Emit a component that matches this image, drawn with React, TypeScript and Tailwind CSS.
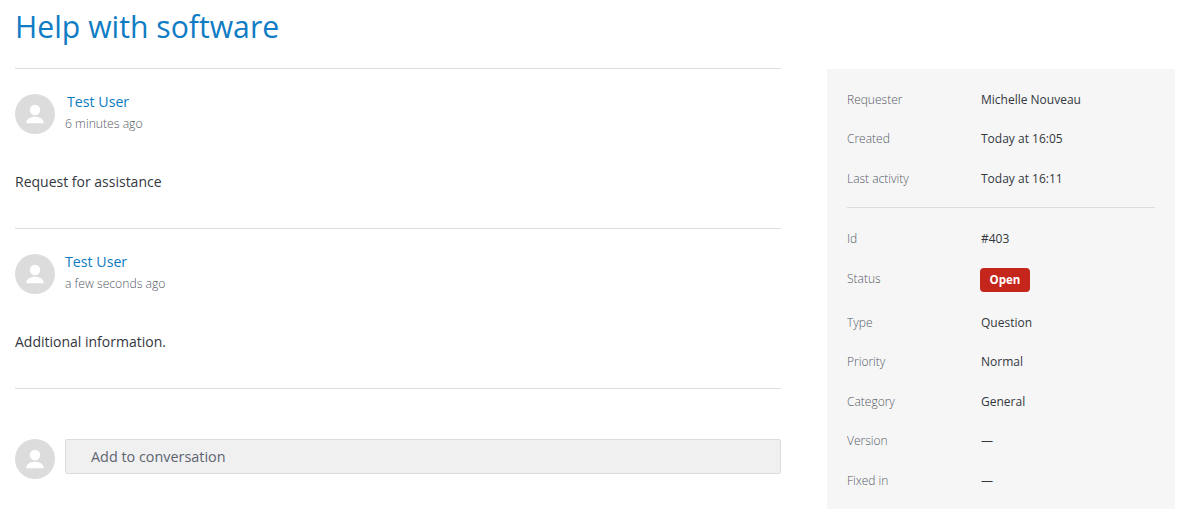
const font = { sans: 'font-["Open_Sans","Noto_Sans",sans-serif]' }

type Post = {
    name: string
    time: string
    body: string
    nameClass: string
}

const posts: Post[] = [
    { name: 'Test User', time: '6 minutes ago', body: 'Request for assistance', nameClass: 'pl-[2px]' },
    { name: 'Test User', time: 'a few seconds ago', body: 'Additional information.', nameClass: '' },
]

const topRows = [
    { label: 'Requester', value: 'Michelle Nouveau' },
    { label: 'Created', value: 'Today at 16:05' },
    { label: 'Last activity', value: 'Today at 16:11' },
]

const bottomRows = [
    { label: 'Type', value: 'Question' },
    { label: 'Priority', value: 'Normal' },
    { label: 'Category', value: 'General' },
    { label: 'Version', value: '—' },
    { label: 'Fixed in', value: '—' },
]

function Avatar() {
    return (
        <div className="w-10 h-10 shrink-0 rounded-full bg-[#dcdcdc] flex items-center justify-center">
            <svg width="20" height="20" viewBox="0 0 20 20" fill="#ffffff">
                <circle cx="10" cy="6" r="5.2" />
                <path d="M1.2 19.3c0-3.900 3.800-6.500 8.800-6.500s8.800 2.600 8.800 6.500z" />
            </svg>
        </div>
    )
}

function Row({ label, value }: { label: string; value: string }) {
    return (
        <div className="flex items-center h-[39.5px]">
            <div className="w-[134px] text-[12px] font-light text-[#555b66]">{label}</div>
            <div className="text-[12px] text-[#33373e]">{value}</div>
        </div>
    )
}

export default function App() {
    return (
        <div className={`w-[1192px] h-[528px] bg-white overflow-hidden ${font.sans}`}>
            <h1 className="pl-[15px] h-[68px] pt-[4px] text-[30.2px] leading-[46px] font-normal text-[#0f7cc4]">Help with software</h1>
            <div className="flex items-start pl-[15px]">
                <div className="w-[766px]">
                    {posts.map((post, idx) => (
                        <div key={idx} className="border-t border-[#dddddd] h-[160px] pt-[25px]">
                            <div className="flex gap-[10px]">
                                <Avatar />
                                <div>
                                    <div className={`text-[14.2px] leading-[16px] text-[#0a7cc2] ${post.nameClass}`}>{post.name}</div>
                                    <div className="mt-[6px] text-[12.2px] leading-[16px] font-light text-[#555b66]">{post.time}</div>
                                </div>
                            </div>
                            <p className="mt-[38px] text-[14px] leading-[20px] text-[#33373e]">{post.body}</p>
                        </div>
                    ))}
                    <div className="border-t border-[#dddddd] pt-[50px] flex gap-[10px]">
                        <Avatar />
                        <div className="flex-1 h-[35px] bg-[#f0f0f0] border border-[#dddddd] rounded-[2px] pl-[25px] flex items-center text-[14.4px] text-[#5d6470]">
                            Add to conversation
                        </div>
                    </div>
                </div>
                <aside className="ml-[46px] w-[348px] h-[440px] mt-[1px] bg-[#f6f6f6] px-5 pt-[11px]">
                    {topRows.map((row) => (
                        <Row key={row.label} label={row.label} value={row.value} />
                    ))}
                    <div className="border-t border-[#dddddd] mt-[8px] mb-[12px]" />
                    <Row label="Id" value="#403" />
                    <div className="flex items-center h-[44px]">
                        <div className="w-[133px] text-[12px] font-light text-[#555b66] pb-[5px]">Status</div>
                        <span className="w-[50px] h-6 mb-[2px] rounded-[4px] bg-[#c5261b] text-white text-[11.5px] font-bold flex items-center justify-center">Open</span>
                    </div>
                    {bottomRows.map((row) => (
                        <Row key={row.label} label={row.label} value={row.value} />
                    ))}
                </aside>
            </div>
        </div>
    )
}
